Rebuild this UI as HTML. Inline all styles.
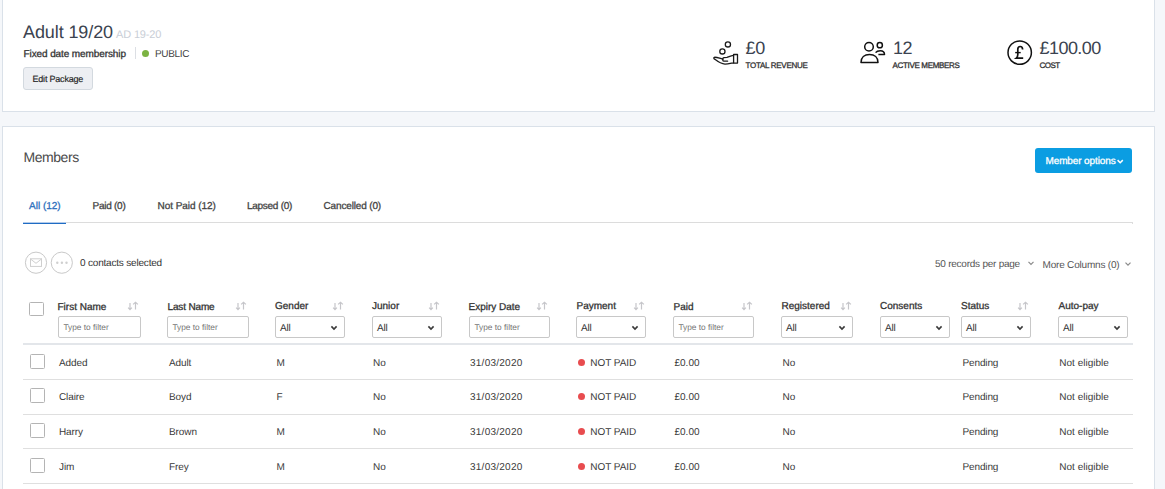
<!DOCTYPE html>
<html><head><meta charset="utf-8"><style>
html,body{margin:0;padding:0;width:1165px;height:489px;overflow:hidden;background:#f5f7fa;}
body{position:relative;font-family:"Liberation Sans",sans-serif;text-rendering:geometricPrecision;}
.t{position:absolute;white-space:pre;}
.b{position:absolute;}
</style></head><body>
<div class="b" style="left:2px;top:-2px;width:1153px;height:112px;background:#fff;border:1px solid #dae1e9;border-top:none;box-sizing:border-box;height:114px;top:-2px"></div>
<div class="b" style="left:2px;top:126px;width:1153px;height:400px;background:#fff;border:1px solid #dae1e9;box-sizing:border-box;"></div>
<span class="t" style="left:23px;top:23.00px;font-size:18px;line-height:18px;font-weight:400;color:#3b4350;letter-spacing:-0.1px;">Adult 19/20</span>
<span class="t" style="left:116px;top:30.00px;font-size:11px;line-height:11px;font-weight:400;color:#c9ced6;letter-spacing:-0.15px;">AD 19-20</span>
<span class="t" style="left:23.5px;top:50.00px;font-size:10px;line-height:10px;font-weight:400;color:#333;letter-spacing:-0.1px;-webkit-text-stroke:0.3px #333;">Fixed date membership</span>
<div class="b" style="left:135px;top:47px;width:1px;height:12px;background:#dcdfe4"></div>
<div class="b" style="left:142px;top:50px;width:7px;height:7px;background:#7cb342;border-radius:50%"></div>
<span class="t" style="left:155px;top:50.00px;font-size:10px;line-height:10px;font-weight:400;color:#444;letter-spacing:-0.35px;">PUBLIC</span>
<div class="b" style="left:23px;top:67px;width:70px;height:23px;background:#edeff3;border:1px solid #d3d9df;border-radius:3px;box-sizing:border-box"></div>
<span class="t" style="left:32.5px;top:75.00px;font-size:9px;line-height:9px;font-weight:400;color:#222;letter-spacing:-0.2px;-webkit-text-stroke:0.15px #222;">Edit Package</span>
<svg class="b" style="left:708px;top:38px" width="34" height="30" viewBox="708 38 34 30"><g fill="none" stroke="#1a1a1a" stroke-width="1.3" stroke-linecap="round" stroke-linejoin="round"><circle cx="727.9" cy="44.4" r="2.6"/><circle cx="722.4" cy="51.4" r="2.6"/><rect x="733.6" y="54.5" width="3.9" height="8.6"/><path d="M733.5 55.4 C731 55.6 729 56.6 727 57.3 L723.8 57.7 C722.3 57.9 722.3 60.9 723.8 61.1 L727.6 61.2"/><path d="M723 59 C720 58.3 716 57 714.4 57.3 C713.4 57.6 713.8 58.6 714.5 59.1 C717 61 721 64 725 64.2 C728 64.2 731 63.3 733.5 62.8"/></g></svg>
<span class="t" style="left:745.5px;top:39.00px;font-size:18px;line-height:18px;font-weight:400;color:#3b4350;letter-spacing:-0.3px;">£0</span>
<span class="t" style="left:745.5px;top:62.00px;font-size:8px;line-height:8px;font-weight:400;color:#333;letter-spacing:-0.28px;-webkit-text-stroke:0.3px #333;">TOTAL REVENUE</span>
<svg class="b" style="left:856px;top:38px" width="34" height="30" viewBox="856 38 34 30"><g fill="none" stroke="#111" stroke-width="1.5" stroke-linejoin="round"><circle cx="869" cy="46.7" r="4.3"/><path d="M861 62.4 C861 57.5 864.5 54.4 869.5 54.4 C874.5 54.4 878 57.5 878 62.4 Z"/><circle cx="879.8" cy="45.2" r="2.6"/><path d="M875.6 52.6 C876.5 51.3 878.3 50.7 880.3 50.7 C882.8 50.7 884.5 52.3 884.5 54.6 L878.4 54.6"/></g></svg>
<span class="t" style="left:893px;top:39.00px;font-size:18px;line-height:18px;font-weight:400;color:#3b4350;letter-spacing:-0.5px;">12</span>
<span class="t" style="left:892.5px;top:62.00px;font-size:8px;line-height:8px;font-weight:400;color:#333;letter-spacing:-0.33px;-webkit-text-stroke:0.3px #333;">ACTIVE MEMBERS</span>
<svg class="b" style="left:1003px;top:36px" width="34" height="34" viewBox="1003 36 34 34"><g fill="none" stroke="#111" stroke-width="1.5"><circle cx="1019.7" cy="52.6" r="11.7"/><path d="M1022.6 49.6 C1022.6 47.2 1021.5 46.5 1020.2 46.5 C1018.6 46.5 1017.8 47.6 1017.8 49.2 L1017.8 54.6 C1017.8 56.3 1017.2 57.4 1016.3 58.1 L1023.2 58.1" stroke-width="1.7"/><path d="M1015.2 52.6 L1020.7 52.6" stroke-width="1.4"/></g></svg>
<span class="t" style="left:1039.5px;top:39.00px;font-size:18px;line-height:18px;font-weight:400;color:#3b4350;letter-spacing:-0.55px;">£100.00</span>
<span class="t" style="left:1039.5px;top:62.00px;font-size:8px;line-height:8px;font-weight:400;color:#333;letter-spacing:-0.5px;-webkit-text-stroke:0.3px #333;">COST</span>
<span class="t" style="left:23.5px;top:150.00px;font-size:14px;line-height:14px;font-weight:400;color:#4a4a4a;letter-spacing:-0.45px;">Members</span>
<div class="b" style="left:1035px;top:148px;width:97px;height:25px;background:#0b9de2;border-radius:3px"></div>
<span class="t" style="left:1045.5px;top:157.00px;font-size:10px;line-height:10px;font-weight:400;color:#fff;letter-spacing:-0.12px;-webkit-text-stroke:0.3px #fff;">Member options</span>
<svg class="b" style="left:1116px;top:158px" width="8" height="6" viewBox="1116 158 8 6"><path d="M1117.6 160.1 L1120.2 162.7 L1122.8 160.1" fill="none" stroke="#fff" stroke-width="1.5"/></svg>
<span class="t" style="left:29px;top:202.00px;font-size:10px;line-height:10px;font-weight:400;color:#2c6fbd;letter-spacing:0px;-webkit-text-stroke:0.3px #2c6fbd;">All (12)</span>
<span class="t" style="left:92.5px;top:202.00px;font-size:10px;line-height:10px;font-weight:400;color:#444;letter-spacing:-0.25px;-webkit-text-stroke:0.3px #444;">Paid (0)</span>
<span class="t" style="left:157.5px;top:202.00px;font-size:10px;line-height:10px;font-weight:400;color:#444;letter-spacing:-0.05px;-webkit-text-stroke:0.3px #444;">Not Paid (12)</span>
<span class="t" style="left:247px;top:202.00px;font-size:10px;line-height:10px;font-weight:400;color:#444;letter-spacing:-0.28px;-webkit-text-stroke:0.3px #444;">Lapsed (0)</span>
<span class="t" style="left:323.5px;top:202.00px;font-size:10px;line-height:10px;font-weight:400;color:#444;letter-spacing:-0.15px;-webkit-text-stroke:0.3px #444;">Cancelled (0)</span>
<div class="b" style="left:23px;top:222px;width:1110px;height:1px;background:#dcdcdc"></div>
<div class="b" style="left:1132px;top:222px;width:1px;height:2px;background:#dcdcdc"></div>
<div class="b" style="left:23px;top:223px;width:43px;height:1px;background:#1f6cc4"></div>
<div class="b" style="left:23px;top:222px;width:43px;height:1px;background:#b3cbea"></div>
<svg class="b" style="left:0;top:240px" width="80" height="40" viewBox="0 240 80 40"><g fill="none" stroke="#c9c9c9" stroke-width="1"><circle cx="36" cy="262.7" r="10.6"/><circle cx="61.8" cy="262.7" r="10.6"/><rect x="30.5" y="258.8" width="11" height="7.6" stroke="#cfcfcf"/><path d="M30.5 259 L36 263.3 L41.5 259" stroke="#cfcfcf"/></g><g fill="#cfcfcf"><circle cx="57.3" cy="262.8" r="1.2"/><circle cx="61.9" cy="262.8" r="1.2"/><circle cx="66.5" cy="262.8" r="1.2"/></g></svg>
<span class="t" style="left:80px;top:259.00px;font-size:10px;line-height:10px;font-weight:400;color:#333;letter-spacing:-0.19px;">0 contacts selected</span>
<span class="t" style="left:935px;top:260.00px;font-size:10px;line-height:10px;font-weight:400;color:#555;letter-spacing:-0.24px;">50 records per page</span>
<svg class="b" style="left:1026px;top:258px" width="10" height="10" viewBox="1026 258 10 10"><path d="M1028.5 261.9 L1031 264.4 L1033.5 261.9" fill="none" stroke="#8a8a8a" stroke-width="1.2"/></svg>
<span class="t" style="left:1042.5px;top:261.00px;font-size:10px;line-height:10px;font-weight:400;color:#555;letter-spacing:-0.19px;">More Columns (0)</span>
<svg class="b" style="left:1122px;top:258px" width="10" height="10" viewBox="1122 258 10 10"><path d="M1125.5 262.7 L1128 265.2 L1130.5 262.7" fill="none" stroke="#8a8a8a" stroke-width="1.2"/></svg>
<div class="b" style="left:29px;top:302px;width:15px;height:14px;border:1px solid #b4b4b4;border-radius:1.5px;box-sizing:border-box;background:#fff"></div>
<span class="t" style="left:57.5px;top:303.00px;font-size:10px;line-height:10px;font-weight:400;color:#333;letter-spacing:0px;-webkit-text-stroke:0.3px #333;">First Name</span>
<svg class="b" style="left:127px;top:300px" width="14" height="12" viewBox="127 300 14 12"><g fill="none" stroke="#c6c6ca" stroke-width="1.2"><path d="M130 303 L130 309.6 M128.1 307.6 L130 309.6 L131.9 307.6"/><path d="M135.5 309.6 L135.5 302.6 M133.1 304.4 L135.5 302.4 L137.9 304.4"/></g></svg>
<div class="b" style="left:58px;top:316px;width:83px;height:22px;border:1px solid #c8c8c8;border-radius:2px;box-sizing:border-box;background:#fff"></div>
<span class="t" style="left:63.5px;top:323.00px;font-size:8.3px;line-height:8.3px;font-weight:400;color:#767676;letter-spacing:0px;">Type to filter</span>
<span class="t" style="left:167.5px;top:303.00px;font-size:10px;line-height:10px;font-weight:400;color:#333;letter-spacing:-0.15px;-webkit-text-stroke:0.3px #333;">Last Name</span>
<svg class="b" style="left:235px;top:300px" width="14" height="12" viewBox="235 300 14 12"><g fill="none" stroke="#c6c6ca" stroke-width="1.2"><path d="M238 303 L238 309.6 M236.1 307.6 L238 309.6 L239.9 307.6"/><path d="M243.5 309.6 L243.5 302.6 M241.1 304.4 L243.5 302.4 L245.9 304.4"/></g></svg>
<div class="b" style="left:167px;top:316px;width:82px;height:22px;border:1px solid #c8c8c8;border-radius:2px;box-sizing:border-box;background:#fff"></div>
<span class="t" style="left:172.5px;top:323.00px;font-size:8.3px;line-height:8.3px;font-weight:400;color:#767676;letter-spacing:0px;">Type to filter</span>
<span class="t" style="left:275px;top:302.00px;font-size:10px;line-height:10px;font-weight:400;color:#333;letter-spacing:0px;-webkit-text-stroke:0.3px #333;">Gender</span>
<svg class="b" style="left:332px;top:300px" width="14" height="12" viewBox="332 300 14 12"><g fill="none" stroke="#c6c6ca" stroke-width="1.2"><path d="M335 303 L335 309.6 M333.1 307.6 L335 309.6 L336.9 307.6"/><path d="M340.5 309.6 L340.5 302.6 M338.1 304.4 L340.5 302.4 L342.9 304.4"/></g></svg>
<div class="b" style="left:275px;top:316px;width:70px;height:22px;border:1px solid #c8c8c8;border-radius:2px;box-sizing:border-box;background:#fff"></div>
<span class="t" style="left:280px;top:324.00px;font-size:10px;line-height:10px;font-weight:400;color:#333;letter-spacing:-0.2px;">All</span>
<svg class="b" style="left:329px;top:322px" width="10" height="10" viewBox="329 322 10 10"><path d="M331.4 326.4 L334 329 L336.6 326.4" fill="none" stroke="#3a3a3a" stroke-width="1.6"/></svg>
<span class="t" style="left:372px;top:302.00px;font-size:10px;line-height:10px;font-weight:400;color:#333;letter-spacing:0px;-webkit-text-stroke:0.3px #333;">Junior</span>
<svg class="b" style="left:428px;top:300px" width="14" height="12" viewBox="428 300 14 12"><g fill="none" stroke="#c6c6ca" stroke-width="1.2"><path d="M431 303 L431 309.6 M429.1 307.6 L431 309.6 L432.9 307.6"/><path d="M436.5 309.6 L436.5 302.6 M434.1 304.4 L436.5 302.4 L438.9 304.4"/></g></svg>
<div class="b" style="left:372px;top:316px;width:70px;height:22px;border:1px solid #c8c8c8;border-radius:2px;box-sizing:border-box;background:#fff"></div>
<span class="t" style="left:377px;top:324.00px;font-size:10px;line-height:10px;font-weight:400;color:#333;letter-spacing:-0.2px;">All</span>
<svg class="b" style="left:426px;top:322px" width="10" height="10" viewBox="426 322 10 10"><path d="M428.4 326.4 L431 329 L433.6 326.4" fill="none" stroke="#3a3a3a" stroke-width="1.6"/></svg>
<span class="t" style="left:468.5px;top:303.00px;font-size:10px;line-height:10px;font-weight:400;color:#333;letter-spacing:0px;-webkit-text-stroke:0.3px #333;">Expiry Date</span>
<svg class="b" style="left:536px;top:300px" width="14" height="12" viewBox="536 300 14 12"><g fill="none" stroke="#c6c6ca" stroke-width="1.2"><path d="M539 303 L539 309.6 M537.1 307.6 L539 309.6 L540.9 307.6"/><path d="M544.5 309.6 L544.5 302.6 M542.1 304.4 L544.5 302.4 L546.9 304.4"/></g></svg>
<div class="b" style="left:469px;top:316px;width:81px;height:22px;border:1px solid #c8c8c8;border-radius:2px;box-sizing:border-box;background:#fff"></div>
<span class="t" style="left:474.5px;top:323.00px;font-size:8.3px;line-height:8.3px;font-weight:400;color:#767676;letter-spacing:0px;">Type to filter</span>
<span class="t" style="left:576.5px;top:302.00px;font-size:10px;line-height:10px;font-weight:400;color:#333;letter-spacing:0px;-webkit-text-stroke:0.3px #333;">Payment</span>
<svg class="b" style="left:633px;top:300px" width="14" height="12" viewBox="633 300 14 12"><g fill="none" stroke="#c6c6ca" stroke-width="1.2"><path d="M636 303 L636 309.6 M634.1 307.6 L636 309.6 L637.9 307.6"/><path d="M641.5 309.6 L641.5 302.6 M639.1 304.4 L641.5 302.4 L643.9 304.4"/></g></svg>
<div class="b" style="left:576px;top:316px;width:70px;height:22px;border:1px solid #c8c8c8;border-radius:2px;box-sizing:border-box;background:#fff"></div>
<span class="t" style="left:581px;top:324.00px;font-size:10px;line-height:10px;font-weight:400;color:#333;letter-spacing:-0.2px;">All</span>
<svg class="b" style="left:630px;top:322px" width="10" height="10" viewBox="630 322 10 10"><path d="M632.4 326.4 L635 329 L637.6 326.4" fill="none" stroke="#3a3a3a" stroke-width="1.6"/></svg>
<span class="t" style="left:673.5px;top:303.00px;font-size:10px;line-height:10px;font-weight:400;color:#333;letter-spacing:0px;-webkit-text-stroke:0.3px #333;">Paid</span>
<svg class="b" style="left:741px;top:300px" width="14" height="12" viewBox="741 300 14 12"><g fill="none" stroke="#c6c6ca" stroke-width="1.2"><path d="M744 303 L744 309.6 M742.1 307.6 L744 309.6 L745.9 307.6"/><path d="M749.5 309.6 L749.5 302.6 M747.1 304.4 L749.5 302.4 L751.9 304.4"/></g></svg>
<div class="b" style="left:673px;top:316px;width:81px;height:22px;border:1px solid #c8c8c8;border-radius:2px;box-sizing:border-box;background:#fff"></div>
<span class="t" style="left:678.5px;top:323.00px;font-size:8.3px;line-height:8.3px;font-weight:400;color:#767676;letter-spacing:0px;">Type to filter</span>
<span class="t" style="left:781.5px;top:302.00px;font-size:10px;line-height:10px;font-weight:400;color:#333;letter-spacing:0px;-webkit-text-stroke:0.3px #333;">Registered</span>
<svg class="b" style="left:840px;top:300px" width="14" height="12" viewBox="840 300 14 12"><g fill="none" stroke="#c6c6ca" stroke-width="1.2"><path d="M843 303 L843 309.6 M841.1 307.6 L843 309.6 L844.9 307.6"/><path d="M848.5 309.6 L848.5 302.6 M846.1 304.4 L848.5 302.4 L850.9 304.4"/></g></svg>
<div class="b" style="left:781px;top:316px;width:72px;height:22px;border:1px solid #c8c8c8;border-radius:2px;box-sizing:border-box;background:#fff"></div>
<span class="t" style="left:786px;top:324.00px;font-size:10px;line-height:10px;font-weight:400;color:#333;letter-spacing:-0.2px;">All</span>
<svg class="b" style="left:837px;top:322px" width="10" height="10" viewBox="837 322 10 10"><path d="M839.4 326.4 L842 329 L844.6 326.4" fill="none" stroke="#3a3a3a" stroke-width="1.6"/></svg>
<span class="t" style="left:880px;top:302.00px;font-size:10px;line-height:10px;font-weight:400;color:#333;letter-spacing:0px;-webkit-text-stroke:0.3px #333;">Consents</span>
<div class="b" style="left:880px;top:316px;width:70px;height:22px;border:1px solid #c8c8c8;border-radius:2px;box-sizing:border-box;background:#fff"></div>
<span class="t" style="left:885px;top:324.00px;font-size:10px;line-height:10px;font-weight:400;color:#333;letter-spacing:-0.2px;">All</span>
<svg class="b" style="left:934px;top:322px" width="10" height="10" viewBox="934 322 10 10"><path d="M936.4 326.4 L939 329 L941.6 326.4" fill="none" stroke="#3a3a3a" stroke-width="1.6"/></svg>
<span class="t" style="left:961px;top:302.00px;font-size:10px;line-height:10px;font-weight:400;color:#333;letter-spacing:0px;-webkit-text-stroke:0.3px #333;">Status</span>
<svg class="b" style="left:1017px;top:300px" width="14" height="12" viewBox="1017 300 14 12"><g fill="none" stroke="#c6c6ca" stroke-width="1.2"><path d="M1020 303 L1020 309.6 M1018.1 307.6 L1020 309.6 L1021.9 307.6"/><path d="M1025.5 309.6 L1025.5 302.6 M1023.1 304.4 L1025.5 302.4 L1027.9 304.4"/></g></svg>
<div class="b" style="left:961px;top:316px;width:70px;height:22px;border:1px solid #c8c8c8;border-radius:2px;box-sizing:border-box;background:#fff"></div>
<span class="t" style="left:966px;top:324.00px;font-size:10px;line-height:10px;font-weight:400;color:#333;letter-spacing:-0.2px;">All</span>
<svg class="b" style="left:1015px;top:322px" width="10" height="10" viewBox="1015 322 10 10"><path d="M1017.4 326.4 L1020 329 L1022.6 326.4" fill="none" stroke="#3a3a3a" stroke-width="1.6"/></svg>
<span class="t" style="left:1058.5px;top:302.00px;font-size:10px;line-height:10px;font-weight:400;color:#333;letter-spacing:0px;-webkit-text-stroke:0.3px #333;">Auto-pay</span>
<div class="b" style="left:1058px;top:316px;width:70px;height:22px;border:1px solid #c8c8c8;border-radius:2px;box-sizing:border-box;background:#fff"></div>
<span class="t" style="left:1063px;top:324.00px;font-size:10px;line-height:10px;font-weight:400;color:#333;letter-spacing:-0.2px;">All</span>
<svg class="b" style="left:1112px;top:322px" width="10" height="10" viewBox="1112 322 10 10"><path d="M1114.4 326.4 L1117 329 L1119.6 326.4" fill="none" stroke="#3a3a3a" stroke-width="1.6"/></svg>
<div class="b" style="left:23px;top:343px;width:1110px;height:2px;background:#e3e6ea"></div>
<div class="b" style="left:30px;top:354px;width:15px;height:15px;border:1px solid #b4b4b4;border-radius:1.5px;box-sizing:border-box;background:#fff"></div>
<span class="t" style="left:59px;top:359.00px;font-size:10px;line-height:10px;font-weight:400;color:#3a3a3a;letter-spacing:-0.1px;">Added</span>
<span class="t" style="left:169px;top:359.00px;font-size:10px;line-height:10px;font-weight:400;color:#3a3a3a;letter-spacing:-0.1px;">Adult</span>
<span class="t" style="left:276.5px;top:359.00px;font-size:10px;line-height:10px;font-weight:400;color:#3a3a3a;letter-spacing:0px;">M</span>
<span class="t" style="left:373px;top:359.00px;font-size:10px;line-height:10px;font-weight:400;color:#3a3a3a;letter-spacing:0px;">No</span>
<span class="t" style="left:470px;top:359.00px;font-size:10px;line-height:10px;font-weight:400;color:#3a3a3a;letter-spacing:0.25px;">31/03/2020</span>
<div class="b" style="left:578px;top:359px;width:7px;height:7px;background:#e84c4f;border-radius:50%"></div>
<span class="t" style="left:590.3px;top:359.00px;font-size:10px;line-height:10px;font-weight:400;color:#3a3a3a;letter-spacing:-0.05px;">NOT PAID</span>
<span class="t" style="left:674.5px;top:359.00px;font-size:10px;line-height:10px;font-weight:400;color:#3a3a3a;letter-spacing:0px;">£0.00</span>
<span class="t" style="left:782.5px;top:359.00px;font-size:10px;line-height:10px;font-weight:400;color:#3a3a3a;letter-spacing:0px;">No</span>
<span class="t" style="left:962.5px;top:359.00px;font-size:10px;line-height:10px;font-weight:400;color:#3a3a3a;letter-spacing:-0.13px;">Pending</span>
<span class="t" style="left:1059.3px;top:359.00px;font-size:10px;line-height:10px;font-weight:400;color:#3a3a3a;letter-spacing:0px;">Not eligible</span>
<div class="b" style="left:23px;top:379px;width:1110px;height:1px;background:#dfdfdf"></div>
<div class="b" style="left:30px;top:388px;width:15px;height:15px;border:1px solid #b4b4b4;border-radius:1.5px;box-sizing:border-box;background:#fff"></div>
<span class="t" style="left:59px;top:393.00px;font-size:10px;line-height:10px;font-weight:400;color:#3a3a3a;letter-spacing:-0.1px;">Claire</span>
<span class="t" style="left:169px;top:393.00px;font-size:10px;line-height:10px;font-weight:400;color:#3a3a3a;letter-spacing:-0.1px;">Boyd</span>
<span class="t" style="left:276.5px;top:393.00px;font-size:10px;line-height:10px;font-weight:400;color:#3a3a3a;letter-spacing:0px;">F</span>
<span class="t" style="left:373px;top:393.00px;font-size:10px;line-height:10px;font-weight:400;color:#3a3a3a;letter-spacing:0px;">No</span>
<span class="t" style="left:470px;top:393.00px;font-size:10px;line-height:10px;font-weight:400;color:#3a3a3a;letter-spacing:0.25px;">31/03/2020</span>
<div class="b" style="left:578px;top:393px;width:7px;height:7px;background:#e84c4f;border-radius:50%"></div>
<span class="t" style="left:590.3px;top:393.00px;font-size:10px;line-height:10px;font-weight:400;color:#3a3a3a;letter-spacing:-0.05px;">NOT PAID</span>
<span class="t" style="left:674.5px;top:393.00px;font-size:10px;line-height:10px;font-weight:400;color:#3a3a3a;letter-spacing:0px;">£0.00</span>
<span class="t" style="left:782.5px;top:393.00px;font-size:10px;line-height:10px;font-weight:400;color:#3a3a3a;letter-spacing:0px;">No</span>
<span class="t" style="left:962.5px;top:393.00px;font-size:10px;line-height:10px;font-weight:400;color:#3a3a3a;letter-spacing:-0.13px;">Pending</span>
<span class="t" style="left:1059.3px;top:393.00px;font-size:10px;line-height:10px;font-weight:400;color:#3a3a3a;letter-spacing:0px;">Not eligible</span>
<div class="b" style="left:23px;top:414px;width:1110px;height:1px;background:#dfdfdf"></div>
<div class="b" style="left:30px;top:423px;width:15px;height:15px;border:1px solid #b4b4b4;border-radius:1.5px;box-sizing:border-box;background:#fff"></div>
<span class="t" style="left:59px;top:428.00px;font-size:10px;line-height:10px;font-weight:400;color:#3a3a3a;letter-spacing:-0.1px;">Harry</span>
<span class="t" style="left:169px;top:428.00px;font-size:10px;line-height:10px;font-weight:400;color:#3a3a3a;letter-spacing:-0.1px;">Brown</span>
<span class="t" style="left:276.5px;top:428.00px;font-size:10px;line-height:10px;font-weight:400;color:#3a3a3a;letter-spacing:0px;">M</span>
<span class="t" style="left:373px;top:428.00px;font-size:10px;line-height:10px;font-weight:400;color:#3a3a3a;letter-spacing:0px;">No</span>
<span class="t" style="left:470px;top:428.00px;font-size:10px;line-height:10px;font-weight:400;color:#3a3a3a;letter-spacing:0.25px;">31/03/2020</span>
<div class="b" style="left:578px;top:428px;width:7px;height:7px;background:#e84c4f;border-radius:50%"></div>
<span class="t" style="left:590.3px;top:428.00px;font-size:10px;line-height:10px;font-weight:400;color:#3a3a3a;letter-spacing:-0.05px;">NOT PAID</span>
<span class="t" style="left:674.5px;top:428.00px;font-size:10px;line-height:10px;font-weight:400;color:#3a3a3a;letter-spacing:0px;">£0.00</span>
<span class="t" style="left:782.5px;top:428.00px;font-size:10px;line-height:10px;font-weight:400;color:#3a3a3a;letter-spacing:0px;">No</span>
<span class="t" style="left:962.5px;top:428.00px;font-size:10px;line-height:10px;font-weight:400;color:#3a3a3a;letter-spacing:-0.13px;">Pending</span>
<span class="t" style="left:1059.3px;top:428.00px;font-size:10px;line-height:10px;font-weight:400;color:#3a3a3a;letter-spacing:0px;">Not eligible</span>
<div class="b" style="left:23px;top:448px;width:1110px;height:1px;background:#dfdfdf"></div>
<div class="b" style="left:30px;top:458px;width:15px;height:15px;border:1px solid #b4b4b4;border-radius:1.5px;box-sizing:border-box;background:#fff"></div>
<span class="t" style="left:59px;top:463.00px;font-size:10px;line-height:10px;font-weight:400;color:#3a3a3a;letter-spacing:-0.1px;">Jim</span>
<span class="t" style="left:169px;top:463.00px;font-size:10px;line-height:10px;font-weight:400;color:#3a3a3a;letter-spacing:-0.1px;">Frey</span>
<span class="t" style="left:276.5px;top:463.00px;font-size:10px;line-height:10px;font-weight:400;color:#3a3a3a;letter-spacing:0px;">M</span>
<span class="t" style="left:373px;top:463.00px;font-size:10px;line-height:10px;font-weight:400;color:#3a3a3a;letter-spacing:0px;">No</span>
<span class="t" style="left:470px;top:463.00px;font-size:10px;line-height:10px;font-weight:400;color:#3a3a3a;letter-spacing:0.25px;">31/03/2020</span>
<div class="b" style="left:578px;top:463px;width:7px;height:7px;background:#e84c4f;border-radius:50%"></div>
<span class="t" style="left:590.3px;top:463.00px;font-size:10px;line-height:10px;font-weight:400;color:#3a3a3a;letter-spacing:-0.05px;">NOT PAID</span>
<span class="t" style="left:674.5px;top:463.00px;font-size:10px;line-height:10px;font-weight:400;color:#3a3a3a;letter-spacing:0px;">£0.00</span>
<span class="t" style="left:782.5px;top:463.00px;font-size:10px;line-height:10px;font-weight:400;color:#3a3a3a;letter-spacing:0px;">No</span>
<span class="t" style="left:962.5px;top:463.00px;font-size:10px;line-height:10px;font-weight:400;color:#3a3a3a;letter-spacing:-0.13px;">Pending</span>
<span class="t" style="left:1059.3px;top:463.00px;font-size:10px;line-height:10px;font-weight:400;color:#3a3a3a;letter-spacing:0px;">Not eligible</span>
<div class="b" style="left:23px;top:483px;width:1110px;height:1px;background:#dfdfdf"></div>
</body></html>
